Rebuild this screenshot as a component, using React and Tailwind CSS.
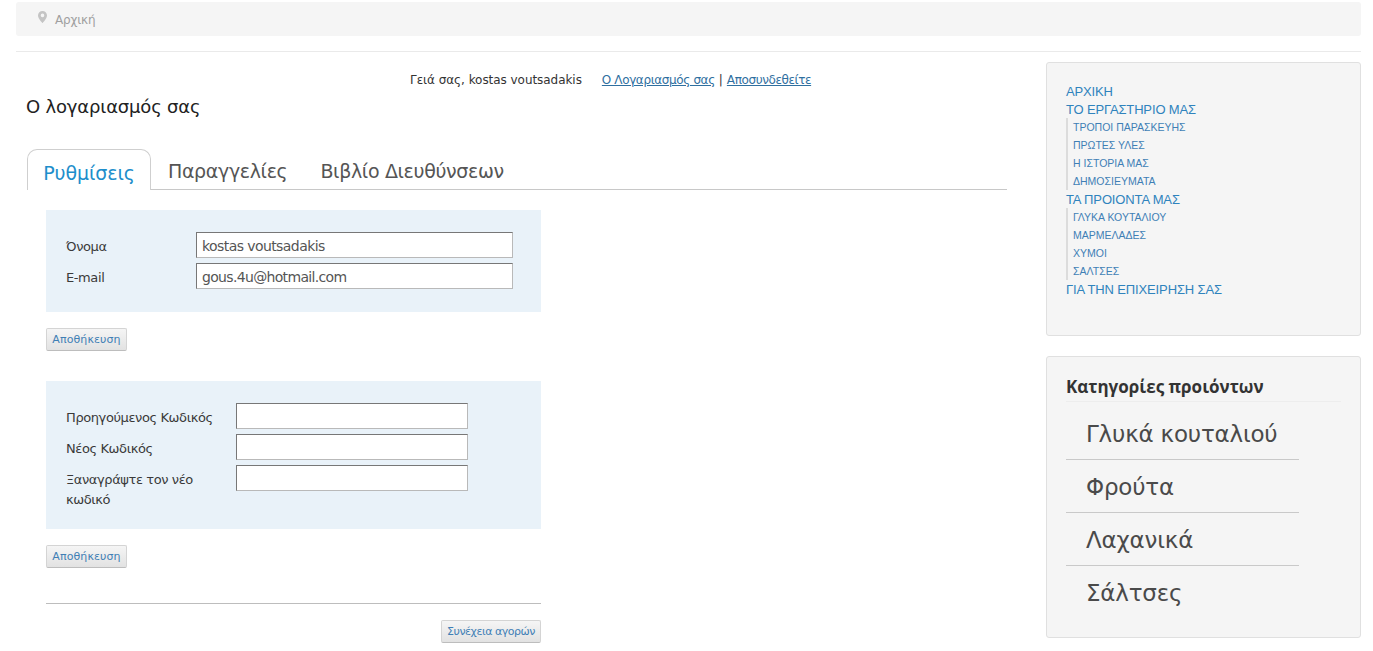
import React from "react";

const dv = "font-['DejaVu_Sans',sans-serif]";
const ls = "font-['Liberation_Sans',sans-serif]";

function Btn({ children, className = "" }) {
  return (
    <button className={`h-[23px] rounded-[2px] border border-[#d4d4d4] border-b-[#bdbdbd] bg-gradient-to-b from-[#f5f5f5] to-[#e2e2e2] pt-[2px] text-[11px] text-[#3f7fb5] ${dv} ${className}`}>
      {children}
    </button>
  );
}

function Field({ label, value, labelW, inputW, wrap, vt }) {
  return (
    <div className="flex items-start">
      <div className={`text-[13px] leading-[20px] pt-[5px] tracking-[-0.4px] text-[#3a3a3a] ${dv}`} style={{ width: labelW }}>
        {wrap ? <div className="w-[150px]">{label}</div> : label}
      </div>
      <div
        className={`h-[26px] shrink-0 bg-white border border-[#b9b9b9] border-t-[#777] border-l-[#777] pl-[5px] text-[14px] leading-[26px] text-[#555] ${vt} ${dv}`}
        style={{ width: inputW }}
      >
        {value}
      </div>
    </div>
  );
}

const Top = ({ children }) => <div className="text-[13px] leading-[18px] tracking-[-0.14px] text-[#2f83bd]">{children}</div>;
const Sub = ({ children }) => <div className="text-[10.5px] leading-[18px] text-[#3f7fb5]">{children}</div>;
const SubList = ({ children }) => <div className="border-l-2 border-[#dcdcdc] pl-[5px]">{children}</div>;

function Cat({ children, last }) {
  return (
    <div className={`h-[53px] w-[233px] pl-5 text-[23px] leading-[54px] tracking-[-0.2px] text-[#4a4a4a] ${dv} ${last ? "" : "border-b border-[#c9c9c9]"}`}>
      {children}
    </div>
  );
}

export default function App() {
  return (
    <div className={`w-[1373px] h-[651px] overflow-hidden bg-white pl-4 pr-3 pt-[2px] ${dv}`}>
      <div className="flex h-[34px] items-center rounded-[3px] bg-[#f5f5f5] pl-[22px] pt-[2px] text-[12px] tracking-[-0.2px] text-[#a0a0a0]">
        <svg width="9" height="12" viewBox="0 0 9 12" className="mr-2 -mt-[6px]">
          <path d="M4.5 0C2 0 0 2 0 4.400 0 7.500 4.500 12 4.500 12S9 7.500 9 4.400C9 2 7 0 4.500 0Zm0 6.200a1.800 1.800 0 1 1 0-3.600 1.800 1.800 0 0 1 0 3.600Z" fill="#c4c4c4" />
        </svg>
        Αρχική
      </div>
      <div className="mt-[15px] h-px bg-[#eaeaea]" />

      <div className="flex">
        <div className="w-[991px] shrink-0 pl-[11px]">
          <div className="mt-[18px] flex h-[20px] items-center pl-[383px] text-[12px] text-[#333]">
            <span className="tracking-[-0.05px]">Γειά σας, kostas voutsadakis</span>
            <span className="ml-5 tracking-[-0.38px] text-[#2f6f9f] underline">Ο Λογαριασμός σας</span>
            <span className="mx-1">|</span>
            <span className="tracking-[-0.4px] text-[#2f6f9f] underline">Αποσυνδεθείτε</span>
          </div>
          <h1 className="-ml-px mt-1 text-[18px] leading-[26px] tracking-[-0.18px] text-[#222]">Ο λογαριασμός σας</h1>

          <div className="mt-[29px] flex h-[41px] items-end border-b border-[#c8c8c8] text-[19px] leading-[28px] tracking-[-0.35px] text-[#555]">
            <div className="mb-[-1px] flex h-[41px] w-[124px] items-center justify-center rounded-t-[10px] border border-b-0 border-[#cfcfcf] bg-white pt-[5px] tracking-[-0.1px] text-[#1e8ecb]">Ρυθμίσεις</div>
            <div className="flex h-[40px] items-center pl-[17px] pr-[33px] pt-1">Παραγγελίες</div>
            <div className="flex h-[40px] items-center pt-1">Βιβλίο Διευθύνσεων</div>
          </div>

          <div className="ml-[19px] w-[495px]">
            <div className="mt-5 flex h-[102px] flex-col gap-[5px] bg-[#e9f2f9] pl-5 pt-[22px]">
              <Field label="Όνομα" value="kostas voutsadakis" labelW={130} inputW={317} vt="tracking-[-0.58px]" />
              <Field label="E-mail" value="gous.4u@hotmail.com" labelW={130} inputW={317} vt="tracking-[-0.67px]" />
            </div>
            <Btn className="mt-4 block w-[81px] tracking-[0.1px]">Αποθήκευση</Btn>

            <div className="mt-[30px] flex h-[148px] flex-col gap-[5px] bg-[#e9f2f9] pl-5 pt-[22px]">
              <Field label="Προηγούμενος Κωδικός" value="" labelW={170} inputW={232} />
              <Field label="Νέος Κωδικός" value="" labelW={170} inputW={232} />
              <Field label="Ξαναγράψτε τον νέο κωδικό" value="" labelW={170} inputW={232} wrap />
            </div>
            <Btn className="mt-4 block w-[81px] tracking-[0.1px]">Αποθήκευση</Btn>

            <div className="mt-[35px] h-px bg-[#bdbdbd]" />
            <div className="mt-4 flex justify-end">
              <Btn className="w-[100px] tracking-[-0.47px]">Συνέχεια αγορών</Btn>
            </div>
          </div>
        </div>

        <div className="ml-[39px] w-[315px] shrink-0 pt-[10px]">
          <div className={`h-[274px] rounded-[3px] border border-[#e0e0e0] bg-[#f5f5f5] pl-[19px] pt-[19px] ${ls}`}>
            <div className="pt-px" />
            <Top>ΑΡΧΙΚΗ</Top>
            <Top>ΤΟ ΕΡΓΑΣΤΗΡΙΟ ΜΑΣ</Top>
            <div className="-mt-px">
              <SubList>
                <Sub>ΤΡΟΠΟΙ ΠΑΡΑΣΚΕΥΗΣ</Sub>
                <Sub>ΠΡΩΤΕΣ ΥΛΕΣ</Sub>
                <Sub>Η ΙΣΤΟΡΙΑ ΜΑΣ</Sub>
                <Sub>ΔΗΜΟΣΙΕΥΜΑΤΑ</Sub>
              </SubList>
            </div>
            <div className="pt-px" />
            <Top>ΤΑ ΠΡΟΙΟΝΤΑ ΜΑΣ</Top>
            <div className="-mt-px">
              <SubList>
                <Sub>ΓΛΥΚΑ ΚΟΥΤΑΛΙΟΥ</Sub>
                <Sub>ΜΑΡΜΕΛΑΔΕΣ</Sub>
                <Sub>ΧΥΜΟΙ</Sub>
                <Sub>ΣΑΛΤΣΕΣ</Sub>
              </SubList>
            </div>
            <div className="pt-px" />
            <Top>ΓΙΑ ΤΗΝ ΕΠΙΧΕΙΡΗΣΗ ΣΑΣ</Top>
          </div>

          <div className="mt-5 h-[282px] rounded-[3px] border border-[#e0e0e0] bg-[#f5f5f5] px-[19px] pt-[17px]">
            <div className="border-b border-[#ededed] pb-[2px] pt-px font-['Open_Sans',sans-serif] text-[17px] font-bold leading-[24px] text-[#333]">Κατηγορίες προιόντων</div>
            <div className="mt-[5px]">
              <Cat>Γλυκά κουταλιού</Cat>
              <Cat>Φρούτα</Cat>
              <Cat>Λαχανικά</Cat>
              <Cat last>Σάλτσες</Cat>
            </div>
          </div>
        </div>
      </div>
    </div>
  );
}
